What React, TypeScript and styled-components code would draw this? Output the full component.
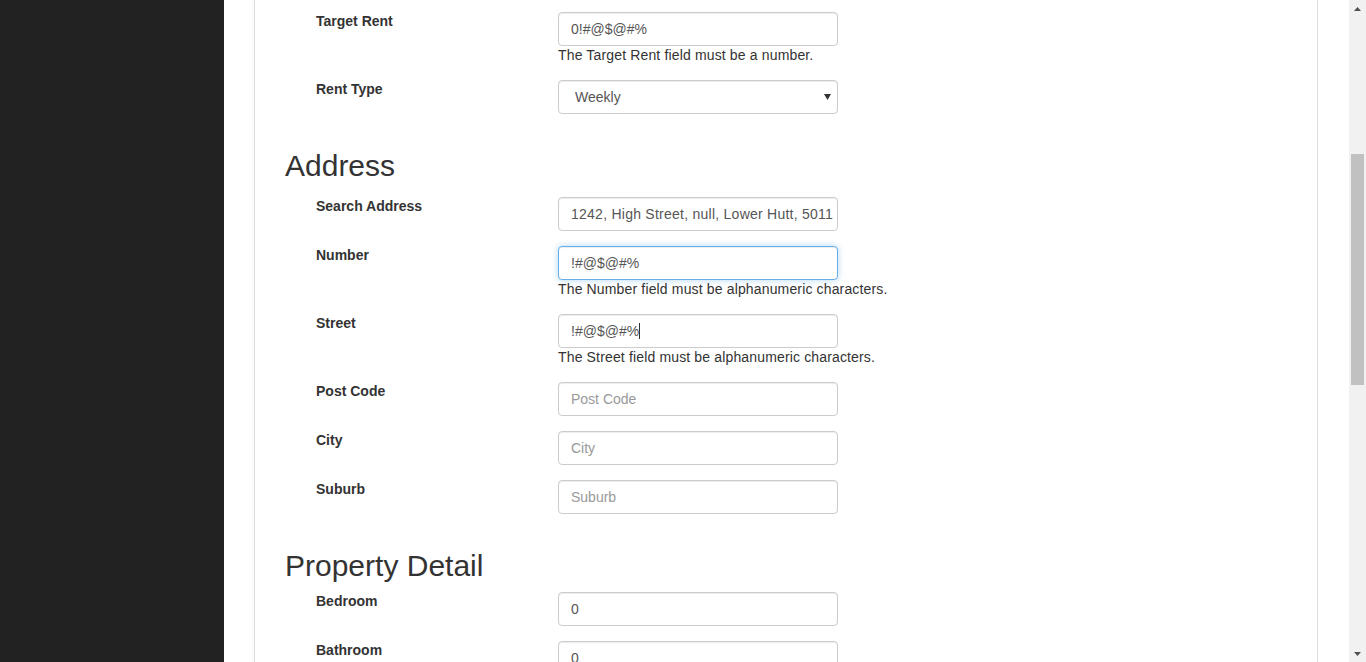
import React from "react";
import styled, { createGlobalStyle } from "styled-components";

const GlobalStyle = createGlobalStyle`
  html, body { margin: 0; padding: 0; height: 100%; overflow: hidden; }
  body {
    font-family: "Liberation Sans", Arial, sans-serif;
    font-size: 14px;
    line-height: 20px;
    color: #333;
    background: #fff;
  }
  * { box-sizing: border-box; }
`;

const Shell = styled.div`
  display: flex;
  height: 662px;
  overflow: hidden;
`;

const Sidebar = styled.aside`
  flex: 0 0 224px;
  background: #222;
`;

const Main = styled.main`
  flex: 1;
  padding: 0 31px 0 30px;
  overflow: hidden;
`;

const Panel = styled.section`
  display: flex;
  flex-direction: column;
  border-left: 1px solid #ddd;
  border-right: 1px solid #ddd;
  box-shadow: -3px 0 4px rgba(0, 0, 0, 0.02);
  padding: 12px 30px 40px 30px;
  min-height: 800px;
`;

const Heading = styled.h2<{ $mb: number }>`
  font-size: 30px;
  font-weight: 500;
  line-height: 33px;
  margin: 20px 0 ${(p) => p.$mb}px 0;
  color: #333;
`;

const Group = styled.div`
  display: grid;
  grid-template-columns: 242px 280px;
  padding-left: 31px;
  margin-bottom: 15px;
`;

const Label = styled.label`
  font-weight: bold;
  font-size: 14px;
  line-height: 20px;
  margin-top: -1px;
`;

const Field = styled.div`
  display: flex;
  flex-direction: column;
  position: relative;
`;

const Input = styled.input<{ $focus?: boolean; $wide?: boolean }>`
  display: block;
  width: 280px;
  height: 34px;
  padding: 6px ${(p) => (p.$wide ? 0 : 12)}px 6px 12px;
  font-family: "Liberation Sans", Arial, sans-serif;
  font-size: 14px;
  line-height: 20px;
  letter-spacing: ${(p) => (p.$wide ? 0.25 : 0)}px;
  color: #555;
  background: #fff;
  border: 1px solid ${(p) => (p.$focus ? "#66afe9" : "#ccc")};
  border-radius: 4px;
  box-shadow: inset 0 1px 1px rgba(0, 0, 0, 0.075)
    ${(p) => (p.$focus ? ", 0 0 6px rgba(102, 175, 233, 0.5)" : "")};
  outline: none;
  &::placeholder { color: #999; opacity: 1; letter-spacing: 0; }
`;

const Select = styled.select`
  display: block;
  width: 280px;
  height: 34px;
  padding: 6px 12px 6px 16px;
  font-family: "Liberation Sans", Arial, sans-serif;
  font-size: 14px;
  line-height: 20px;
  color: #555;
  background: #fff;
  border: 1px solid #ccc;
  border-radius: 4px;
  box-shadow: inset 0 1px 1px rgba(0, 0, 0, 0.075);
  appearance: none;
  -webkit-appearance: none;
  outline: none;
`;

const SelectArrow = styled.svg`
  position: absolute;
  left: 266px;
  top: 14px;
  pointer-events: none;
`;

const Caret = styled.span<{ $left: number }>`
  position: absolute;
  top: 9px;
  width: 1px;
  height: 16px;
  background: #333;
  left: ${(p) => p.$left}px;
`;

const HelpText = styled.div`
  font-size: 14px;
  line-height: 19px;
  letter-spacing: 0.15px;
  color: #333;
  white-space: nowrap;
`;

const Scrollbar = styled.div`
  flex: 0 0 17px;
  background: #f1f1f1;
  display: flex;
  flex-direction: column;
  align-items: center;
`;

const ScrollButton = styled.div`
  height: 17px;
  width: 17px;
  display: flex;
  align-items: center;
  justify-content: center;
`;

const ScrollTrack = styled.div`
  flex: 1;
  width: 17px;
  padding: 137px 2px 0 2px;
`;

const Thumb = styled.div`
  height: 231px;
  background: #c1c1c1;
`;

type Row = {
  label: string;
  value?: string;
  placeholder?: string;
  error?: string;
  focus?: boolean;
  wide?: boolean;
  caretAt?: number;
};

const FormRow: React.FC<Row> = ({ label, value, placeholder, error, focus, wide, caretAt }) => (
  <Group>
    <Label>{label}</Label>
    <Field>
      <Input
        type="text"
        readOnly
        defaultValue={value}
        placeholder={placeholder}
        $focus={focus}
        $wide={wide}
      />
      {caretAt !== undefined && <Caret $left={caretAt} />}
      {error && <HelpText>{error}</HelpText>}
    </Field>
  </Group>
);

const addressRows: Row[] = [
  { label: "Search Address", value: "1242, High Street, null, Lower Hutt, 5011", wide: true },
  {
    label: "Number",
    value: "!#@$@#%",
    focus: true,
    error: "The Number field must be alphanumeric characters.",
  },
  {
    label: "Street",
    value: "!#@$@#%",
    caretAt: 81,
    error: "The Street field must be alphanumeric characters.",
  },
  { label: "Post Code", placeholder: "Post Code" },
  { label: "City", placeholder: "City" },
  { label: "Suburb", placeholder: "Suburb" },
];

const propertyRows: Row[] = [
  { label: "Bedroom", value: "0" },
  { label: "Bathroom", value: "0" },
];

export default function App() {
  return (
    <>
      <GlobalStyle />
      <Shell>
        <Sidebar />
        <Main>
          <Panel>
            <FormRow
              label="Target Rent"
              value="0!#@$@#%"
              error="The Target Rent field must be a number."
            />
            <Group>
              <Label>Rent Type</Label>
              <Field>
                <Select defaultValue="Weekly">
                  <option>Weekly</option>
                  <option>Fortnightly</option>
                  <option>Monthly</option>
                </Select>
                <SelectArrow width="7" height="6" viewBox="0 0 7 6">
                  <path d="M0 0 H7 L3.5 6 Z" fill="#333" />
                </SelectArrow>
              </Field>
            </Group>

            <Heading $mb={15}>Address</Heading>
            {addressRows.map((r) => (
              <FormRow key={r.label} {...r} />
            ))}

            <Heading $mb={10}>Property Detail</Heading>
            {propertyRows.map((r) => (
              <FormRow key={r.label} {...r} />
            ))}
          </Panel>
        </Main>
        <Scrollbar>
          <ScrollButton>
            <svg width="7" height="4" viewBox="0 0 7 4">
              <path d="M0 4 L3.5 0 L7 4 Z" fill="#505050" />
            </svg>
          </ScrollButton>
          <ScrollTrack>
            <Thumb />
          </ScrollTrack>
          <ScrollButton>
            <svg width="7" height="4" viewBox="0 0 7 4">
              <path d="M0 0 L7 0 L3.5 4 Z" fill="#505050" />
            </svg>
          </ScrollButton>
        </Scrollbar>
      </Shell>
    </>
  );
}
